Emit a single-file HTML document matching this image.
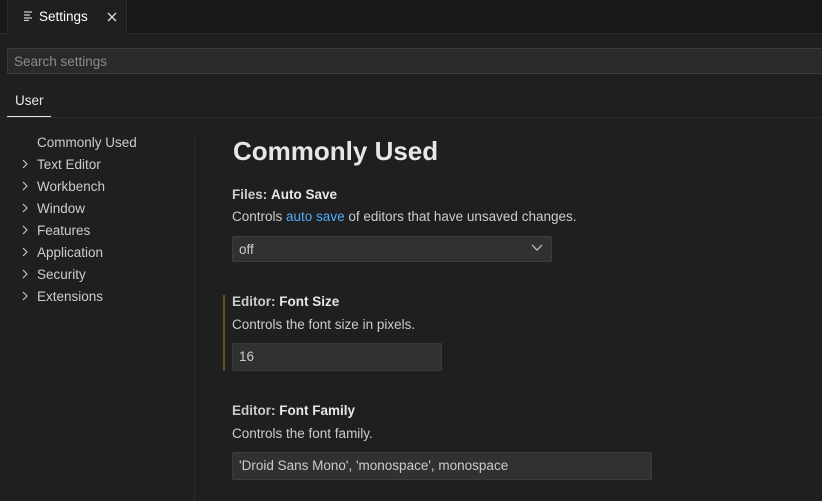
<!DOCTYPE html>
<html><head><style>
*{margin:0;padding:0;box-sizing:border-box}
body{width:822px;height:501px;background:#1f1f1f;font-family:"Liberation Sans",sans-serif;color:#ccc;position:relative;overflow:hidden;font-size:13.5px}
.a{position:absolute;white-space:nowrap}
.tabbar{left:0;top:0;width:822px;height:34px;background:#181818;border-bottom:1px solid #2b2b2b}
.tab{left:7px;top:0;width:120px;height:34px;background:#1f1f1f;border-left:1px solid #2b2b2b;border-right:1px solid #2b2b2b}
.search{left:7px;top:48px;width:820px;height:26px;background:#2a2a2a;border:1px solid #3c3c3c;border-radius:2px;color:#8b8b8b;padding:5px 6px}
.toc{left:37px;color:#ccc}
.inp{background:#313131;border:1px solid #3c3c3c;border-radius:2px;color:#ccc;padding:5px 6px}
.t{font-weight:bold;color:#ccc}
.t b{color:#e7e7e7}
</style></head><body>
<div class="a tabbar"></div>
<div class="a tab"></div>
<svg class="a" style="left:24px;top:11px" width="10" height="10"><path d="M0 1h8M0 4h6M0 7h8M0 9.5h5" stroke="#ccc" stroke-width="1.2"/></svg>
<div class="a" style="left:39px;top:9px;color:#fff">Settings</div>
<svg class="a" style="left:107px;top:12px" width="10" height="10"><path d="M1 1L9 9M9 1L1 9" stroke="#ddd" stroke-width="1.3"/></svg>
<div class="a search">Search settings</div>
<div class="a" style="left:15px;top:93px;color:#e7e7e7">User</div>
<div class="a" style="left:7px;top:116px;width:44px;height:1px;background:#e7e7e7"></div>
<div class="a" style="left:0;top:117px;width:822px;height:1px;background:#2b2b2b"></div>
<div class="a" style="left:194px;top:132px;width:1px;height:369px;background:#2b2b2b"></div>
<div class="a toc" style="top:135px">Commonly Used</div>
<div class="a toc" style="top:157px">Text Editor</div>
<div class="a toc" style="top:179px">Workbench</div>
<div class="a toc" style="top:201px">Window</div>
<div class="a toc" style="top:223px">Features</div>
<div class="a toc" style="top:245px">Application</div>
<div class="a toc" style="top:267px">Security</div>
<div class="a toc" style="top:289px">Extensions</div>
<svg class="a" style="left:20px;top:159px" width="10" height="150"><g fill="none" stroke="#ccc" stroke-width="1.1"><path d="M3 1l4 4-4 4"/><path d="M3 23l4 4-4 4"/><path d="M3 45l4 4-4 4"/><path d="M3 67l4 4-4 4"/><path d="M3 89l4 4-4 4"/><path d="M3 111l4 4-4 4"/><path d="M3 133l4 4-4 4"/></g></svg>
<div class="a" style="left:233px;top:136px;font-size:26px;font-weight:bold;color:#e7e7e7">Commonly Used</div>
<div class="a t" style="left:232px;top:187px">Files: <b>Auto Save</b></div>
<div class="a" style="left:232px;top:209px">Controls <span style="color:#4daafc">auto save</span> of editors that have unsaved changes.</div>
<div class="a inp" style="left:232px;top:236px;width:320px;height:26px">off</div>
<svg class="a" style="left:531px;top:244px" width="12" height="8"><path d="M1 1l5 5 5-5" fill="none" stroke="#ccc" stroke-width="1.2"/></svg>
<div class="a" style="left:223px;top:295px;width:2px;height:76px;background:#6b4f1d"></div>
<div class="a t" style="left:232px;top:294px">Editor: <b>Font Size</b></div>
<div class="a" style="left:232px;top:317px">Controls the font size in pixels.</div>
<div class="a inp" style="left:232px;top:343px;width:210px;height:28px">16</div>
<div class="a t" style="left:232px;top:403px">Editor: <b>Font Family</b></div>
<div class="a" style="left:232px;top:426px">Controls the font family.</div>
<div class="a inp" style="left:232px;top:452px;width:420px;height:28px">'Droid Sans Mono', 'monospace', monospace</div>
</body></html>
